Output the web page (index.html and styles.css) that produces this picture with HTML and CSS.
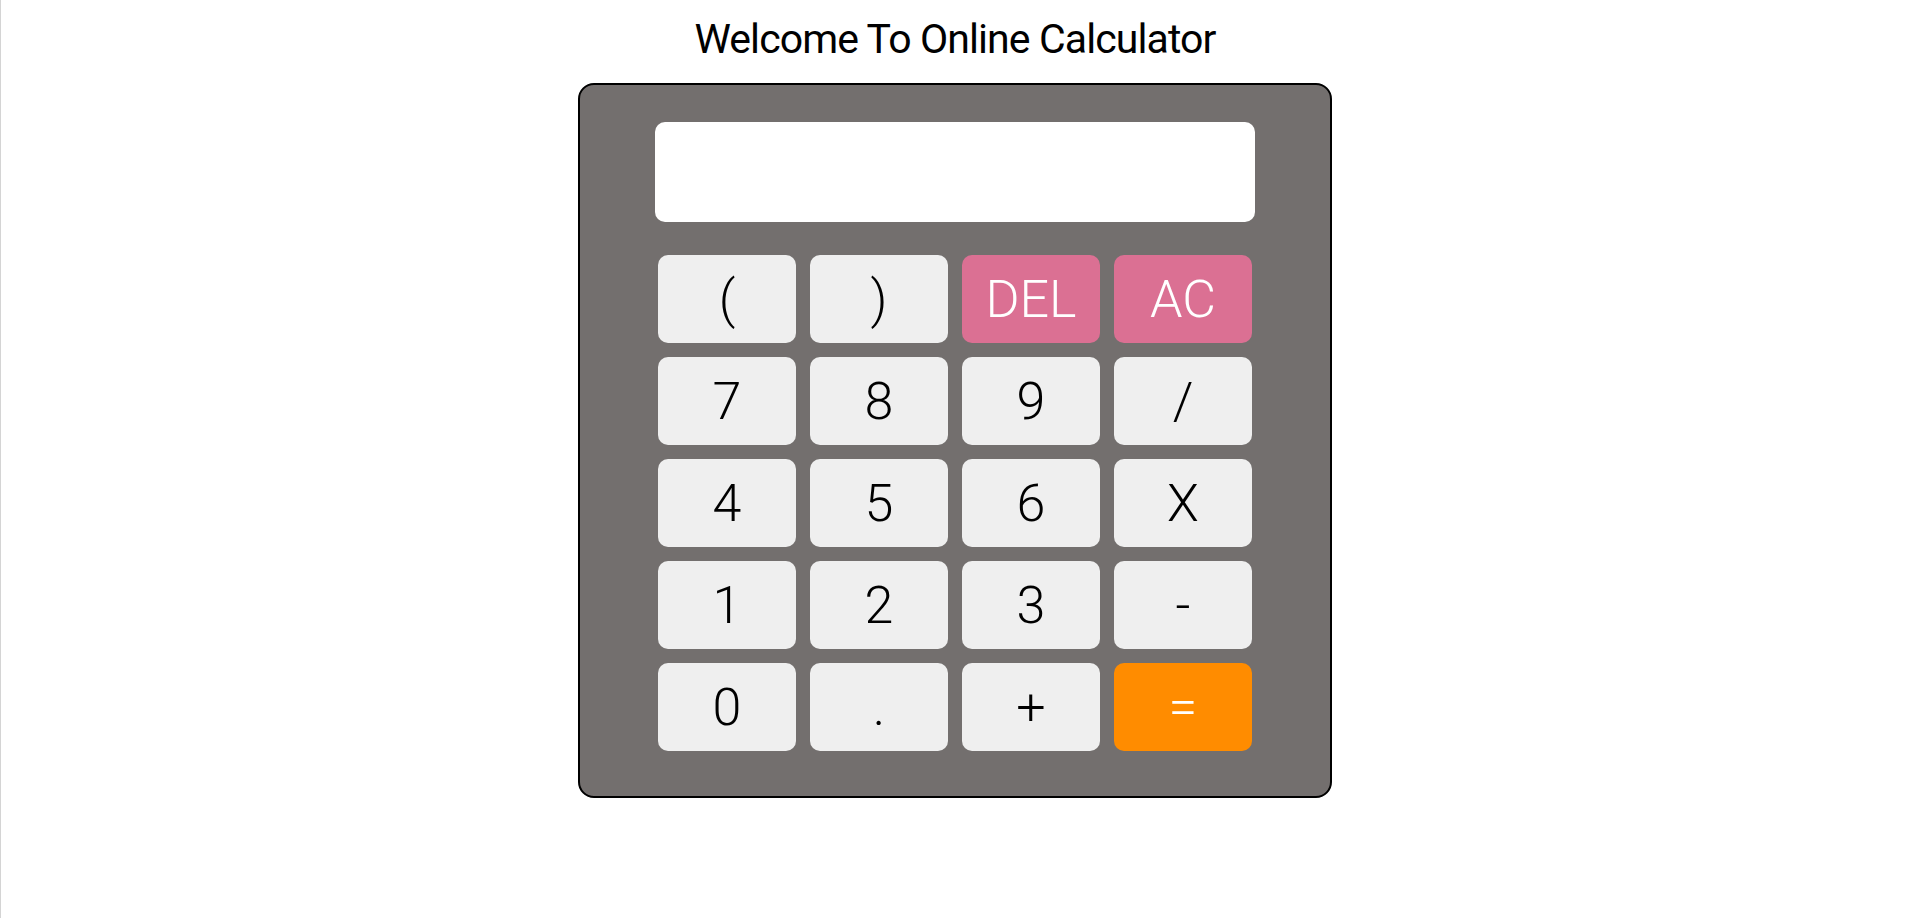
FILE: index.html
```html
<!DOCTYPE html>
<html lang="en">
<head>
<meta charset="utf-8">
<title>Online Calculator</title>
<link rel="stylesheet" href="styles.css">
</head>
<body>
<h1 class="title">Welcome To Online Calculator</h1>
<div class="calculator">
  <div class="display"></div>
  <div class="keys">
    <button class="key">(</button>
    <button class="key">)</button>
    <button class="key key-red">DEL</button>
    <button class="key key-red">AC</button>
    <button class="key">7</button>
    <button class="key">8</button>
    <button class="key">9</button>
    <button class="key">/</button>
    <button class="key">4</button>
    <button class="key">5</button>
    <button class="key">6</button>
    <button class="key">X</button>
    <button class="key">1</button>
    <button class="key">2</button>
    <button class="key">3</button>
    <button class="key">-</button>
    <button class="key">0</button>
    <button class="key">.</button>
    <button class="key">+</button>
    <button class="key key-equal">=</button>
  </div>
</div>
</body>
</html>
```
FILE: styles.css
```css
html, body {
  margin: 0;
  padding: 0;
  background: #ffffff;
}
body {
  font-family: Roboto, "Liberation Sans", sans-serif;
  min-height: 918px;
  box-sizing: border-box;
  border-left: 1px solid #d4d4d4;
  border-right: 1px solid transparent;
}
.title {
  margin: 15px 0 0;
  font-size: 41px;
  line-height: 1.2;
  font-weight: 400;
  letter-spacing: -0.9px;
  text-align: center;
  color: #000;
}
.calculator {
  width: 600px;
  margin: 19px auto 0;
  padding: 37px 75px 45px;
  background: #736f6e;
  border: 2px solid #000;
  border-radius: 16px;
}
.display {
  height: 100px;
  background: #fff;
  border-radius: 10px;
  margin-bottom: 33px;
}
.keys {
  width: 594px;
  margin: 0 auto;
  display: grid;
  grid-template-columns: repeat(4, 138px);
  grid-auto-rows: 88px;
  gap: 14px;
}
.key {
  border: none;
  border-radius: 10px;
  background: #efefef;
  color: #000;
  font-family: Roboto, "Liberation Sans", sans-serif;
  font-weight: 300;
  font-size: 52px;
  padding: 2px 0 0;
  line-height: 1;
}
.key-red {
  background: #db7093;
  color: #fff;
}
.key-equal {
  background: #ff8c00;
  color: #fff;
}
```
